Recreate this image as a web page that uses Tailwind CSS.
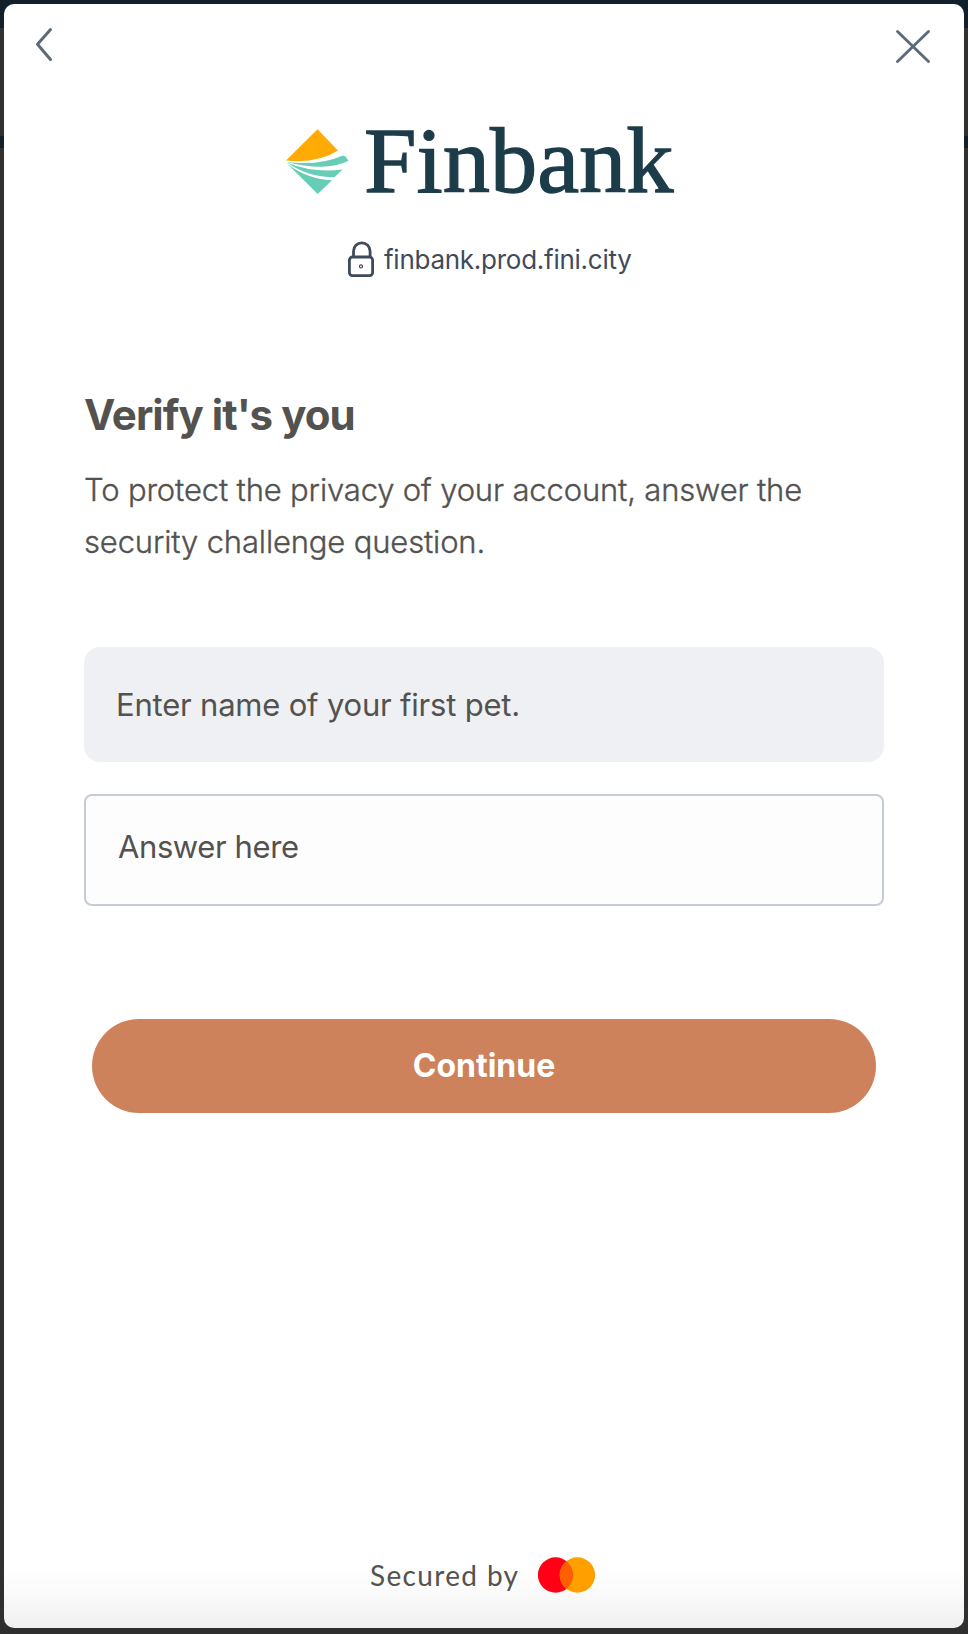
<!DOCTYPE html>
<html lang="en">
<head>
<meta charset="utf-8">
<title>Finbank</title>
<script src="https://cdn.jsdelivr.net/npm/@tailwindcss/browser@4"></script>
</head>
<body class="h-[1634px] w-[968px] overflow-hidden bg-[linear-gradient(#12202b_0_28px,#33312f_28px_136px,#12202b_136px_148px,#33312f_148px_1500px,#2e2e2f_1634px)] px-1 pt-1 font-['Inter',sans-serif] text-[#53524f]">
<main class="flex h-[1624px] w-[960px] flex-col rounded-[10px] bg-[linear-gradient(#fff_0_1562px,#fafafa_1590px,#efefef_1624px)]">
  <header class="flex h-[86px] items-start justify-between pt-5 pr-8 pl-7">
    <button aria-label="Back"><svg class="h-10 w-8" viewBox="0 0 32 40" fill="none" stroke="#5c6b7a" stroke-width="3" stroke-linecap="round" stroke-linejoin="round"><path d="M18.500 5.500 5.500 20.200 18.500 35.500"/></svg></button>
    <button aria-label="Close"><svg class="h-10 w-10" viewBox="0 0 40 40" fill="none" stroke="#5c6b7a" stroke-width="2.900" stroke-linecap="round"><path d="M5.500 7.500 36.500 37.500M36.500 7.500 5.500 37.500"/></svg></button>
  </header>
  <div class="flex h-[134px] justify-center">
    <svg class="h-[134px] w-[400px]" viewBox="284 90 400 134" role="img">
      <path fill="#ffaa05" d="M317.500 129.300 338 150.500Q318 163.500 286 160.600Z"/>
      <path fill="#68cdb6" d="M286 162Q319 166 342.500 155.700L345 156 348.500 160.700Q327 172 286 162Z"/>
      <path fill="#68cdb6" d="M287 162.800Q314 173.500 342.500 169.500L334.500 177.300Q309 177.500 287 162.800Z"/>
      <path fill="#68cdb6" d="M287 163.500Q306 179 332 180.300L317.700 194Z"/>
      <text x="364" y="191.900" font-family="Liberation Serif" font-size="92.500" textLength="309.500" lengthAdjust="spacingAndGlyphs" fill="#1d3c4a" stroke="#1d3c4a" stroke-width="1.300">Finbank</text>
    </svg>
  </div>
  <div class="mt-[15px] flex h-10 items-center gap-1.5 pl-[342px] text-[26px] text-[#3f4b5b]">
    <svg class="h-10 w-8" viewBox="0 -0.7 32 40" fill="none" stroke="#3f4b5b" stroke-width="2.800"><path d="M7.500 17V11.500a8.300 8.300 0 0 1 16.600 0V17"/><rect x="3.400" y="17.300" width="23.200" height="18.600" rx="3"/><circle cx="15" cy="26.700" r="1.500" stroke-width="1.200"/></svg>
    <span class="tracking-[-0.26px]">finbank.prod.fini.city</span>
  </div>
  <section class="flex flex-col px-20">
    <h1 class="mt-[106px] h-[60px] text-[42px] leading-[60px] font-bold tracking-[-0.96px]">Verify it's you</h1>
    <p class="mt-[19px] text-[31px] leading-[52px] font-light tracking-[-0.16px] [-webkit-text-stroke:0.35px_#53524f]">To protect the privacy of your account, answer the<br>security challenge question.</p>
    <div class="mt-[79px] flex h-[115px] items-center rounded-2xl bg-[#eff0f4] px-8 pt-0.5 text-[31px] tracking-[-0.2px]"><span>Enter name of your first pet.</span></div>
    <input class="mt-8 h-28 rounded-lg border-2 border-[#c5ccd7] bg-[#fdfdfd] px-8 pb-2 text-[31px] tracking-[-0.4px] placeholder:text-[#53524f] placeholder:opacity-100" placeholder="Answer here">
    <button class="mx-2 mt-[113px] h-[94px] rounded-full bg-[#ce825c] text-[32px] font-bold text-white">Continue</button>
  </section>
  <footer class="mt-auto mb-8 flex h-[42px] items-center pl-[366px]">
    <span class="w-[168px] font-['Lato',sans-serif] text-[28px] tracking-[1.35px] whitespace-nowrap">Secured by</span>
    <svg class="h-10 w-[60px]" viewBox="0 0 60 40"><circle cx="17.600" cy="20" r="17.700" fill="#ff0016"/><circle cx="39.400" cy="20" r="17.700" fill="#ff9f00"/><path fill="#ff5f00" d="M28.500 6.100a17.700 17.700 0 0 1 0 27.800a17.700 17.700 0 0 1 0-27.800"/></svg>
  </footer>
</main>
</body>
</html>
